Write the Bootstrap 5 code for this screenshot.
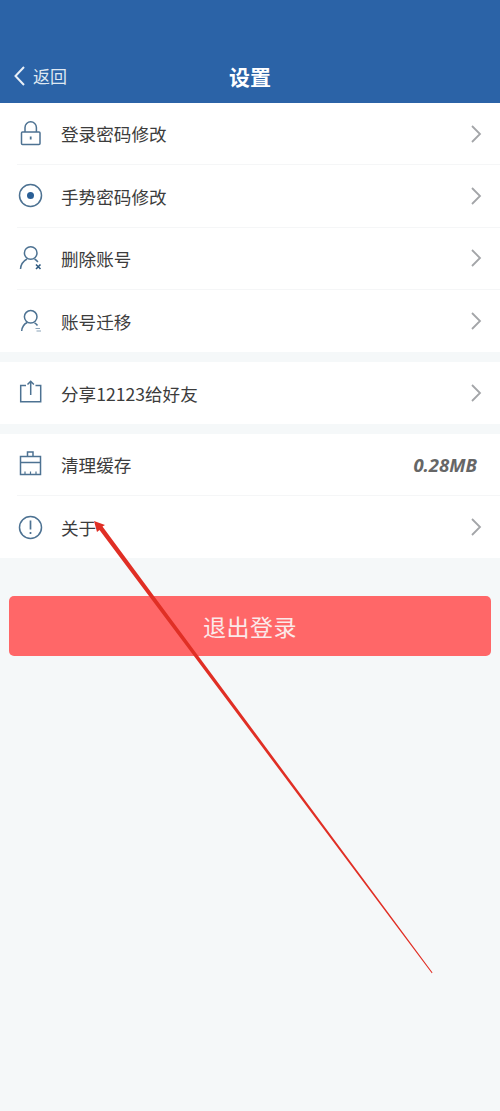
<!DOCTYPE html>
<html lang="zh">
<head>
<meta charset="utf-8">
<title>设置</title>
<link href="https://cdn.jsdelivr.net/npm/bootstrap@5.3.0/dist/css/bootstrap.min.css" rel="stylesheet">
<style>
html,body{height:100%}
body{background:#f5f8f9;font-family:"Noto Sans CJK SC","Liberation Sans",sans-serif;color:#3a3a3a;position:relative;overflow:hidden}
.app-head{height:103px;background:#2b63a7;color:#fff;padding:56px 0 7px}
.head-back{width:100px;font-size:17px;padding-left:12px;color:#dfe8f2;gap:7px;height:40px}
.head-title{font-size:21px;font-weight:700;line-height:40px}
.head-gap{width:100px}
.set-group{background:#fff;margin-bottom:9.6px}
.set-group:last-of-type{margin-bottom:0}
.set-row{height:62.3px;margin-left:17px;padding-right:18px;border-bottom:1px solid #f5f6f7;font-size:17.6px}
.set-row:last-child{border-bottom:0}
.set-icon{width:27px;height:27px;margin-right:17px;flex:none}
.set-label{flex:1;line-height:1;color:#3c3c3c;padding-top:1px}
.set-size{font:italic 700 18.500px "Open Sans","Liberation Sans",sans-serif;color:#666;margin-right:5px}
.logout-wrap{padding:38px 9px 0}
.logout-btn{height:60px;background:#ff6768;color:#fbe9e9;font-size:23px;border:0;border-radius:5px;width:100%;letter-spacing:.5px}
.arrow-mark{position:absolute;left:0;top:0;pointer-events:none}
</style>
</head>
<body>
<header class="app-head d-flex align-items-center justify-content-between">
  <div class="head-back d-flex align-items-center">
    <svg width="14" height="20" viewBox="0 0 14 20" fill="none" stroke="#e8eff7" stroke-width="2"><path d="M12 1 3.500 10l8.500 9"/></svg>
    <span>返回</span>
  </div>
  <div class="head-title">设置</div>
  <div class="head-gap"></div>
</header>

<section class="set-group">
  <div class="set-row d-flex align-items-center">
    <svg class="set-icon" viewBox="0 0 27 27" fill="none" stroke="#4d7292" stroke-width="1.500"><rect x="4.500" y="12" width="18.500" height="12.500" rx="1"/><path d="M8 12V7.500a5.700 5.700 0 0 1 11.400 0V12"/><path d="M13.700 16.500v3" stroke-width="1.800"/></svg>
    <span class="set-label">登录密码修改</span>
    <svg width="12" height="20" viewBox="0 0 12 20" fill="none" stroke="#a3a5a8" stroke-width="1.800"><path d="M2 2l8 8-8 8"/></svg>
  </div>
  <div class="set-row d-flex align-items-center">
    <svg class="set-icon" viewBox="0 0 27 27" fill="none" stroke="#4d7292" stroke-width="1.500"><circle cx="13.500" cy="13.500" r="11"/><circle cx="13.500" cy="13.500" r="3.500" fill="#2b5f96" stroke="none"/></svg>
    <span class="set-label">手势密码修改</span>
    <svg width="12" height="20" viewBox="0 0 12 20" fill="none" stroke="#a3a5a8" stroke-width="1.800"><path d="M2 2l8 8-8 8"/></svg>
  </div>
  <div class="set-row d-flex align-items-center">
    <svg class="set-icon" viewBox="0 0 27 27" fill="none" stroke="#4d7292" stroke-width="1.500"><circle cx="13.700" cy="8" r="6.300"/><path d="M3.500 24c.3-4.800 3-8 6.500-10M17.500 14c1.300.7 2.500 1.700 3.400 3"/><path d="M19 19.500l4.500 4.500M23.500 19.500 19 24" stroke-width="1.600" stroke="#2f5a80"/></svg>
    <span class="set-label">删除账号</span>
    <svg width="12" height="20" viewBox="0 0 12 20" fill="none" stroke="#a3a5a8" stroke-width="1.800"><path d="M2 2l8 8-8 8"/></svg>
  </div>
  <div class="set-row d-flex align-items-center">
    <svg class="set-icon" viewBox="0 0 27 27" fill="none" stroke="#4d7292" stroke-width="1.500"><circle cx="13.700" cy="8.800" r="6.300"/><path d="M4.700 23c.3-4 2.500-7 5.500-8.500M17.500 14.800c1.200.6 2.200 1.500 3 2.700"/><path d="M18.500 20.500h4.500M19.500 23h4.500" stroke-width="1" stroke="#8aa3b8"/></svg>
    <span class="set-label">账号迁移</span>
    <svg width="12" height="20" viewBox="0 0 12 20" fill="none" stroke="#a3a5a8" stroke-width="1.800"><path d="M2 2l8 8-8 8"/></svg>
  </div>
</section>

<section class="set-group">
  <div class="set-row d-flex align-items-center">
    <svg class="set-icon" viewBox="0 0 27 27" fill="none" stroke="#4d7292" stroke-width="1.500"><path d="M9 6.500H3.700v16.300h20V6.500H18.500"/><path d="M13.700 16V2.500M10.500 5.500l3.200-3.200 3.200 3.200"/></svg>
    <span class="set-label">分享12123给好友</span>
    <svg width="12" height="20" viewBox="0 0 12 20" fill="none" stroke="#a3a5a8" stroke-width="1.800"><path d="M2 2l8 8-8 8"/></svg>
  </div>
</section>

<section class="set-group">
  <div class="set-row d-flex align-items-center">
    <svg class="set-icon" viewBox="0 0 27 27" fill="none" stroke="#4d7292" stroke-width="1.500"><path d="M3.500 5.500h20v18h-20zM3.500 11.500h20M10.500 5.500V1h5.500v4.500"/><path d="M8 23v-2.500M13.500 23v-2.500M19 23v-2.500" stroke-width="1.200"/></svg>
    <span class="set-label">清理缓存</span>
    <span class="set-size">0.28MB</span>
  </div>
  <div class="set-row d-flex align-items-center">
    <svg class="set-icon" viewBox="0 0 27 27" fill="none" stroke="#4d7292" stroke-width="1.500"><circle cx="13.500" cy="13.500" r="11"/><path d="M13.500 6.500v9M13.500 18v2" stroke-width="1.700"/></svg>
    <span class="set-label">关于</span>
    <svg width="12" height="20" viewBox="0 0 12 20" fill="none" stroke="#a3a5a8" stroke-width="1.800"><path d="M2 2l8 8-8 8"/></svg>
  </div>
</section>

<div class="logout-wrap">
  <button type="button" class="btn logout-btn d-flex align-items-center justify-content-center">退出登录</button>
</div>

<svg class="arrow-mark" width="500" height="1111" viewBox="0 0 500 1111"><path d="M94 521 105 525 102.500 526.500 432.500 972.500 431.800 973.200 99.500 530 97 532z" fill="#e02f25"/></svg>

<script src="https://cdn.jsdelivr.net/npm/bootstrap@5.3.0/dist/js/bootstrap.bundle.min.js"></script>
</body>
</html>
